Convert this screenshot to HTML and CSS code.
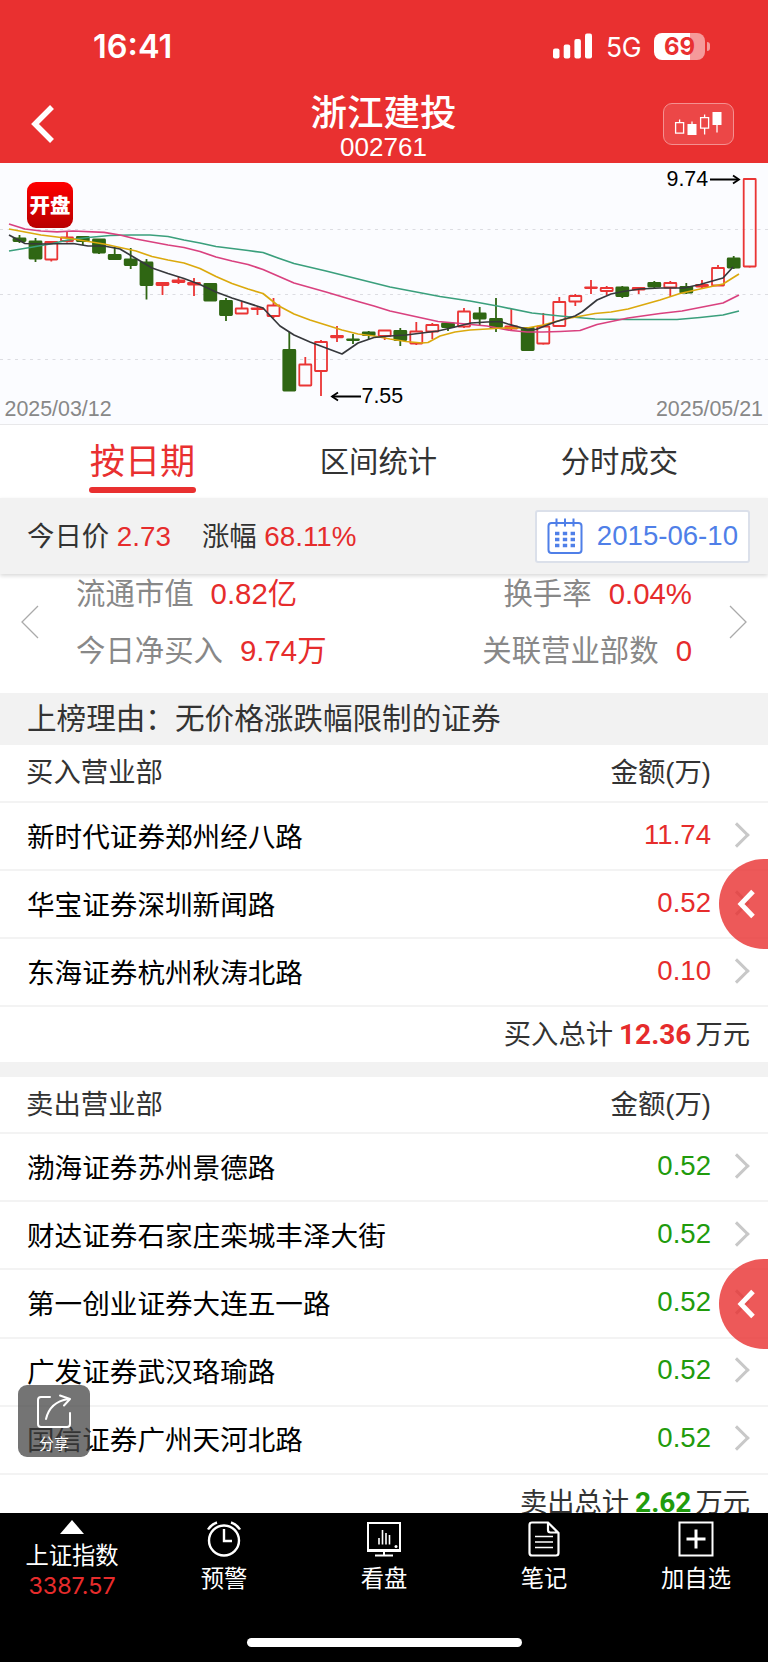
FILE: index.html
```html
<!DOCTYPE html>
<html lang="zh-CN">
<head>
    <meta charset="UTF-8">
    <meta name="viewport" content="width=device-width, initial-scale=1.0">
    <title>浙江建投 002761</title>
    <link rel="stylesheet" href="styles.css">
</head>
<body>
    <div class="app">
        <header class="header">
            <div class="status-bar">
                <span class="time">16:41</span>
                <div class="status-icons">
                    <svg class="signal" width="39" height="26" viewBox="0 0 39 26" fill="#fff">
                        <rect x="0" y="15.500" width="6.500" height="10" rx="2"/>
                        <rect x="10.7" y="11.500" width="6.500" height="14" rx="2"/>
                        <rect x="21.4" y="6" width="6.500" height="19.500" rx="2"/>
                        <rect x="32" y="0.500" width="7" height="25" rx="2"/>
                    </svg>
                    <span class="network">5G</span>
                    <div class="battery">69</div>
                    <div class="battery-tip"></div>
                </div>
            </div>
            <div class="title-bar">
                <svg class="back" width="26" height="40" viewBox="0 0 26 40" fill="none" stroke="#fff" stroke-width="5.500">
                    <path d="M23 3L6 20L23 37"/>
                </svg>
                <div class="title">
                    <h1>浙江建投</h1>
                    <div class="code">002761</div>
                </div>
                <div class="chart-button">
                    <svg width="50" height="34" viewBox="0 0 50 34" fill="none" stroke="#fff" stroke-width="1.3">
                        <path d="M2.6 15.6h8v10.6h-8zM6.6 12.5v3M27.6 10.6h8v10.6h-8zM31.6 7.5v3M31.6 21v6.5M44 18v7.5M19 14.5v3"/>
                        <path d="M14.5 17h9v11h-9zM39.5 5h9v13h-9z" fill="#fff" stroke="none"/>
                    </svg>
                </div>
            </div>
        </header>

        <section class="chart">
            <svg id="kline" width="768" height="261" viewBox="0 3 768 261">
                <g stroke="#dcdde2" stroke-width="1" stroke-dasharray="3 4.5">
                    <path d="M0 69.5H768M0 134.5H768M0 199.5H768"/>
                </g>
                <g id="candles"></g>
                <g id="averages" fill="none" stroke-width="1.7" stroke-linejoin="round"></g>
                <g stroke="#000" stroke-width="1.8" fill="none">
                    <path d="M710 19.5H738M332 236.5H361"/>
                    <path d="M733 15.5L739 19.5L733 23.5M338 232.5L332 236.5L338 240.5"/>
                </g>
                <g class="price-label">
                    <text x="666.5" y="26">9.74</text>
                    <text x="361.5" y="243">7.55</text>
                </g>
                <g class="date-label">
                    <text x="4.5" y="256">2025/03/12</text>
                    <text x="763" y="256" text-anchor="end">2025/05/21</text>
                </g>
            </svg>
            <div class="open-badge">开盘</div>
        </section>

        <nav class="tabs">
            <div class="tab active">按日期</div>
            <div class="tab">区间统计</div>
            <div class="tab">分时成交</div>
        </nav>

        <div class="price-bar">
            <span class="quote">今日价 <b>2.73</b></span>
            <span class="quote change">涨幅 <b>68.11%</b></span>
            <div class="date-picker">
                <svg width="36" height="36" viewBox="0 0 36 36" fill="none" stroke="#4f7fe8" stroke-width="2">
                    <rect x="1.5" y="5" width="33" height="30" rx="3"/>
                    <path d="M9.5 0.5v8M18 0.5v8M26.500 0.5v8"/>
                    <path d="M8 15.500h20M8 21.500h20M8 27.500h20" stroke-width="3.6" stroke-dasharray="4.400 3.400"/>
                </svg>
                <span>2015-06-10</span>
            </div>
        </div>

        <section class="stats">
            <svg width="18" height="34" viewBox="0 0 18 34" fill="none" stroke="#aaa" stroke-width="1.3">
                <path d="M17 1L1 17L17 33"/>
            </svg>
            <div class="stats-grid">
                <div class="stats-row">
                    <div>流通市值<b>0.82亿</b></div>
                    <div>换手率<b>0.04%</b></div>
                </div>
                <div class="stats-row">
                    <div>今日净买入<b>9.74万</b></div>
                    <div>关联营业部数<b>0</b></div>
                </div>
            </div>
            <svg width="18" height="34" viewBox="0 0 18 34" fill="none" stroke="#aaa" stroke-width="1.3">
                <path d="M1 1L17 17L1 33"/>
            </svg>
        </section>

        <div class="reason">上榜理由：无价格涨跌幅限制的证券</div>

        <section class="list buy">
            <div class="list-head"><span>买入营业部</span><span>金额(万)</span></div>
            <div class="row"><span>新时代证券郑州经八路</span><span class="amount">11.74</span><i class="arrow"></i></div>
            <div class="row"><span>华宝证券深圳新闻路</span><span class="amount">0.52</span><i class="arrow"></i></div>
            <div class="row"><span>东海证券杭州秋涛北路</span><span class="amount">0.10</span><i class="arrow"></i></div>
            <div class="total">买入总计<b>12.36</b>万元</div>
        </section>

        <section class="list sell">
            <div class="list-head"><span>卖出营业部</span><span>金额(万)</span></div>
            <div class="row"><span>渤海证券苏州景德路</span><span class="amount">0.52</span><i class="arrow"></i></div>
            <div class="row"><span>财达证券石家庄栾城丰泽大街</span><span class="amount">0.52</span><i class="arrow"></i></div>
            <div class="row"><span>第一创业证券大连五一路</span><span class="amount">0.52</span><i class="arrow"></i></div>
            <div class="row"><span>广发证券武汉珞瑜路</span><span class="amount">0.52</span><i class="arrow"></i></div>
            <div class="row"><span>国信证券广州天河北路</span><span class="amount">0.52</span><i class="arrow"></i></div>
            <div class="total">卖出总计<b>2.62</b>万元</div>
        </section>

        <div class="side-tab side-tab-top">
            <svg width="20" height="30" viewBox="0 0 20 30" fill="none" stroke="#fff" stroke-width="5"><path d="M17 2.500L5 15L17 27.500"/></svg>
        </div>
        <div class="side-tab side-tab-bottom">
            <svg width="20" height="30" viewBox="0 0 20 30" fill="none" stroke="#fff" stroke-width="5"><path d="M17 2.500L5 15L17 27.500"/></svg>
        </div>

        <div class="share">
            <svg width="36" height="36" viewBox="0 0 36 36" fill="none" stroke="#fff" stroke-width="2" stroke-linecap="round" stroke-linejoin="round">
                <path d="M14 3H5Q2 3 2 6V30Q2 33 5 33H31Q34 33 34 30V19"/>
                <path d="M10 25Q14 8 32 5M24 1.500L34 5L28 11.500"/>
            </svg>
            <span>分享</span>
        </div>

        <footer class="bottom-nav">
            <div class="nav-item index">
                <div class="triangle"></div>
                <span>上证指数</span>
                <span class="index-value">3387.57</span>
            </div>
            <div class="nav-item wide">
                <svg width="36" height="36" viewBox="0 0 36 36" fill="none" stroke="#fff" stroke-width="2.400">
                    <circle cx="18" cy="19.500" r="15"/>
                    <path d="M18 8V20H26M2 8.500Q5 3.500 11 1.500M34 8.500Q31 3.500 25 1.500"/>
                </svg>
                <span>预警</span>
            </div>
            <div class="nav-item wide">
                <svg width="36" height="36" viewBox="0 0 36 36" fill="none" stroke="#fff" stroke-width="2">
                    <path d="M2 2H34V30H2ZM18 30V34M9 34.500H27" />
                    <path d="M2 29.500H34" stroke-width="3"/>
                    <path d="M13 23.500V17M16.500 23.500V9M20 23.500V12M23.500 23.500V14" stroke-width="1.600"/>
                    <circle cx="30" cy="25.500" r="1.500" fill="#fff" stroke="none"/>
                </svg>
                <span>看盘</span>
            </div>
            <div class="nav-item wide">
                <svg width="36" height="36" viewBox="0 0 36 36" fill="none" stroke="#fff" stroke-width="2.200">
                    <path d="M6 1.500H22L32.500 12V32Q32.500 34.500 30 34.500H6Q3.500 34.500 3.500 32V4Q3.500 1.500 6 1.500ZM22 2V9Q22 11.500 24.500 11.500H32"/>
                    <path d="M9 15.500H27M9 21H27M9 26.500H27" stroke-width="1.700"/>
                </svg>
                <span>笔记</span>
            </div>
            <div class="nav-item">
                <svg width="36" height="36" viewBox="0 0 36 36" fill="none" stroke="#fff" stroke-width="2">
                    <rect x="1.500" y="1.500" width="33" height="33"/>
                    <path d="M8.500 18H27.500M18 8.500V27.500" stroke-width="3"/>
                </svg>
                <span>加自选</span>
            </div>
            <div class="home-indicator"></div>
        </footer>
    </div>

    <script src="script.js"></script>
</body>
</html>
```

FILE: styles.css
```css
* {
    box-sizing: border-box;
}

body {
    margin: 0;
    background-color: #fff;
    font-family: "Liberation Sans", "Noto Sans CJK SC", sans-serif;
    color: #333;
}

b {
    font-weight: normal;
    color: #e62c2c;
}

.app {
    position: relative;
    width: 768px;
    height: 1662px;
    overflow: hidden;
}

.header {
    height: 163px;
    background-color: #e93030;
    color: white;
}

.status-bar {
    height: 92px;
    padding: 0 58px 0 93px;
    display: flex;
    justify-content: space-between;
    align-items: center;
}

.time {
    font: 600 32.5px Inter, sans-serif;
    letter-spacing: 0;
}

.status-icons {
    display: flex;
    align-items: center;
}

.network {
    margin: 1px 13px 0 14px;
    font: 26.5px/28px Inter, sans-serif;
    letter-spacing: -0.5px;
}

.battery {
    width: 51px;
    height: 27px;
    border-radius: 8px;
    background: linear-gradient(to right, #fff 70%, #f59a9a 70%);
    color: #e93030;
    font: 700 24px/27px Inter, sans-serif;
    text-align: center;
}

.battery-tip {
    width: 3px;
    height: 9px;
    margin-left: 2px;
    border-radius: 0 3px 3px 0;
    background-color: #f59a9a;
}

.title-bar {
    height: 71px;
    padding: 0 34px 0 29px;
    display: flex;
    justify-content: space-between;
}

.back {
    margin-top: 12px;
    margin-right: 49px;
}

.title {
    padding-top: 1px;
    text-align: center;
}

h1 {
    margin: 0;
    font-size: 36.5px;
    line-height: 41px;
    font-weight: 500;
}

.code {
    font-size: 26px;
    line-height: 27px;
}

.chart-button {
    width: 71px;
    height: 42px;
    margin-top: 11px;
    padding: 3px 9px;
    border: 1px solid #f49090;
    border-radius: 9px;
    background-color: #ec4747;
}

.chart {
    position: relative;
    height: 262px;
    background-color: #fbfcff;
    border-bottom: 1px solid #e8e8ea;
}

.chart svg {
    display: block;
}

.price-label,
.date-label {
    font-size: 21.4px;
}

.date-label {
    fill: #888;
}

.open-badge {
    position: absolute;
    left: 27px;
    top: 19px;
    width: 46px;
    height: 46px;
    border-radius: 9px;
    background: linear-gradient(#ff0000, #b80000);
    color: white;
    font-size: 20.5px;
    font-weight: 900;
    line-height: 48px;
    text-align: center;
}

.tabs {
    height: 73px;
    padding: 0 90px 0 89px;
    display: flex;
    justify-content: space-between;
}

.tab {
    font-size: 29.3px;
    line-height: 74px;
}

.tab.active {
    position: relative;
    width: 107px;
    color: #e93030;
    font-size: 35.2px;
    line-height: 73px;
    text-align: center;
}

.tab.active::after {
    content: "";
    position: absolute;
    left: 0;
    top: 62px;
    width: 107px;
    height: 6px;
    border-radius: 3px;
    background-color: #e93030;
}

.price-bar {
    position: relative;
    height: 76px;
    padding: 0 18px 0 27px;
    display: flex;
    align-items: center;
    background-color: #f2f2f2;
    box-shadow: 0 2px 4px rgba(0,0,0,0.15);
    font-size: 27.4px;
}

.quote {
    padding-bottom: 4px;
}

.quote b {
    font-size: 27.8px;
}

.change {
    margin-left: 31px;
}

.date-picker {
    margin-left: auto;
    width: 215px;
    height: 53px;
    padding: 0 10px;
    display: flex;
    align-items: center;
    justify-content: space-between;
    border: 2px solid #dbe0ea;
    border-radius: 3px;
    background-color: white;
    color: #4f7fe8;
    font-size: 27.6px;
    white-space: nowrap;
}

.stats {
    height: 119px;
    padding: 0 21px;
    display: flex;
    justify-content: space-between;
}

.stats > svg {
    margin-top: 31px;
}

.stats-grid {
    width: 616px;
    padding-top: 1px;
    color: #888;
    font-size: 29.4px;
}

.stats-row {
    height: 57px;
    line-height: 37px;
    display: flex;
    justify-content: space-between;
}

.stats-row b {
    margin-left: 17px;
}

.reason {
    height: 52px;
    padding-left: 27px;
    background-color: #f2f2f2;
    font-size: 29.6px;
    line-height: 52px;
}

.list-head {
    height: 56px;
    padding: 0 57px 0 26px;
    display: flex;
    justify-content: space-between;
    font-size: 27.4px;
    line-height: 55px;
}

.row {
    height: 68.1px;
    padding: 0 22px 3px 27px;
    display: flex;
    align-items: center;
    border-top: 2px solid #f3f3f3;
    color: #000;
    font-size: 27.6px;
}

.amount {
    margin-left: auto;
    color: #e62c2c;
}

.sell .amount,
.sell b {
    color: #219b0c;
}

.arrow {
    width: 18px;
    height: 18px;
    margin-left: 17px;
    border-top: 3px solid #c8c8c8;
    border-right: 3px solid #c8c8c8;
    transform: rotate(45deg);
}

.total {
    height: 57px;
    padding-right: 18px;
    border-top: 2px solid #f3f3f3;
    font-size: 27.3px;
    line-height: 56px;
    text-align: right;
}

.total b {
    margin: 0 4px 0 6px;
    font-family: Roboto, sans-serif;
    font-size: 28px;
    font-weight: 700;
}

.sell {
    border-top: 15px solid #f2f2f2;
}

.sell .list-head {
    height: 55px;
}

.side-tab {
    position: absolute;
    right: 0;
    width: 49px;
    height: 90px;
    padding: 30px 0 0 17px;
    border-radius: 45px 0 0 45px;
    background-color: rgba(233,48,48,0.8);
}

.side-tab-top {
    top: 859px;
}

.side-tab-bottom {
    top: 1259px;
}

.share {
    position: absolute;
    left: 18px;
    top: 1385px;
    width: 72px;
    height: 72px;
    padding-top: 9px;
    display: flex;
    flex-direction: column;
    align-items: center;
    border-radius: 9px;
    background-color: rgba(70,70,70,0.75);
    color: white;
    font-size: 15px;
    line-height: 27px;
}

.bottom-nav {
    position: absolute;
    left: 0;
    right: 0;
    bottom: 0;
    height: 149px;
    display: flex;
    background-color: black;
    color: white;
    font-size: 23.3px;
}

.nav-item {
    width: 144px;
    padding-top: 8px;
    display: flex;
    flex-direction: column;
    align-items: center;
}

.nav-item.wide {
    width: 160px;
}

.nav-item span {
    margin-top: 5px;
    line-height: 34px;
}

.nav-item.index {
    padding-top: 7px;
}

.triangle {
    border: 12px solid transparent;
    border-top: 0;
    border-bottom: 14px solid white;
}

.nav-item.index .index-value {
    margin-top: 2px;
    color: #e62c2c;
    font: 23.3px/22px Inter, sans-serif;
}

.home-indicator {
    position: absolute;
    left: 247px;
    bottom: 15px;
    width: 275px;
    height: 9px;
    border-radius: 5px;
    background-color: white;
}
```

FILE: script.js
```javascript
const RED = '#ea3535';
const GREEN = '#2f6613';

// x, high, body top, body bottom, low, color
const candles = [
    [19.5, 75, 78.5, 81, 83, GREEN], [35.5, 78, 81.5, 98.5, 102, GREEN],
    [51.3, 82, 82, 99.5, 101.5, RED], [67, 71, 77.5, 81, 82.5, RED],
    [82.8, 76, 77, 81, 85, GREEN], [99, 79, 79.5, 92.5, 94, GREEN],
    [114.7, 87, 95, 99, 99, GREEN], [130.7, 88, 99.5, 105, 109, GREEN],
    [146.5, 99, 102.5, 125, 139.5, GREEN], [162.5, 122, 123, 125, 135, RED],
    [178.5, 117, 120.5, 122, 124, RED], [194, 118, 123, 124.5, 136, RED],
    [210.3, 123, 124, 140.5, 140.5, GREEN], [226, 138, 141, 155, 161, GREEN],
    [241.7, 142, 148.5, 153.5, 153.5, RED], [257.5, 147, 148.5, 149, 155, RED],
    [273.5, 138, 145.5, 156, 158, RED], [289.3, 172, 190, 230.5, 230.5, GREEN],
    [305.3, 197, 204.5, 225.5, 225.5, RED], [321, 180, 182, 211, 236, RED],
    [337, 166, 175.8, 177.3, 182, RED], [353, 174, 179.5, 180, 184, GREEN],
    [368.7, 171, 172.5, 175, 179, GREEN], [384.7, 170, 170.5, 176, 180, RED],
    [400.3, 168, 171, 180, 186, GREEN], [416.3, 162, 171.5, 183.5, 185, RED],
    [432.3, 163, 165, 171.5, 179, RED], [448, 163, 163.5, 167, 171, GREEN],
    [464, 148, 151.5, 166.5, 168, RED], [479.7, 147, 153.5, 158.5, 165, GREEN],
    [496, 138, 159, 167, 172, GREEN], [511.3, 149, 166.5, 168.5, 170, RED],
    [527.7, 168, 168, 190, 191, GREEN], [543.3, 153, 166.5, 183.5, 184.5, RED],
    [559.3, 137, 142, 166, 167, RED], [575.3, 134, 136, 141.5, 146, RED],
    [591, 120, 127.5, 128, 134, RED], [606.7, 126, 128, 131, 135, RED],
    [622.3, 126, 127.5, 136, 138, GREEN], [638.7, 127, 128, 129.5, 134, RED],
    [654.3, 121, 123, 126.5, 129, GREEN], [670.3, 121, 123, 127.5, 137, RED],
    [686.3, 123, 127, 132.5, 134, GREEN], [702, 120, 125, 126.5, 129, RED],
    [718, 105, 108, 125.5, 125.5, RED], [733.7, 96, 98.5, 107.5, 109, GREEN],
    [749.7, 18.5, 19, 106.5, 107.5, RED]
];

// moving averages
const averages = {
    '#3a9f7c': '9,91 30,87.5 50,84 68,80 88,77.5 110,75.5 130,75 150,75 168,76.5 184,80 200,83 216,86.5 248,90.5 263,92.5 278,98 294,103.5 326,111 358,119 390,127 440,136.5 470,141 500,146.5 532,153 560,156 595,159 628,159.5 677,159.5 700,157.5 723,155 739,151',
    '#d9417f': '9,64 25,69 41,71 57,71.8 73,71 104,72.3 120,75 136,79 152,82 168,85 184,87.5 200,91.5 216,97 232,101 248,104.5 263,109.5 294,123 326,132 358,141.5 374,146 390,151 422,158 438,161.5 455,163 487,166 511,170.5 527,172 543,172 560,171.5 580,170.5 597,164.5 628,158 660,153.5 682,151 723,143 739,135',
    '#dba90d': '9,69 25,72 41,75 57,77 73,79 104,84 120,87.5 136,91 152,96.5 168,100 184,103 200,108.5 216,116.5 232,123.5 248,129 263,133.5 278,145.5 294,154 310,160 326,165 342,170 358,174 374,176 390,179 406,181.5 422,183 428,182.5 440,176 455,172 470,170 487,169 502,168 527,168 543,165 565,159 595,153.5 611,152 628,149 660,140 680,133.5 700,129 723,124 739,114',
    '#36383c': '9,75 25,83.5 41,84 73,83.5 88,86 104,86 120,89 136,98.5 152,108 168,113.5 184,118.5 200,124.5 216,132 232,138 263,148 280,166 294,175 310,182 326,188 342,194 358,183 374,177.5 390,176 406,175 422,173 438,171 455,167 471,163 487,162 500,161.5 508,164 528,169.5 536,169.5 555,162 575,156 582,152 597,140 611,134 623,131.5 640,129 660,128 684,128 700,124.5 723,118 733,107'
};

let averageLines = '';
for (const color in averages) {
    averageLines += `<polyline stroke="${color}" points="${averages[color]}"/>`;
}
document.getElementById('averages').innerHTML = averageLines;

document.getElementById('candles').innerHTML = candles.map(([x, high, top, bottom, low, color]) => {
    const fill = color === GREEN ? GREEN : 'none';
    return `<g stroke="${color}" stroke-width="1.8" fill="${fill}">
        <path d="M${x} ${high}V${top}M${x} ${bottom}V${low}"/>
        <rect x="${x - 6}" y="${top}" width="12" height="${bottom - top}" rx="0.5"/>
    </g>`;
}).join('');
```
